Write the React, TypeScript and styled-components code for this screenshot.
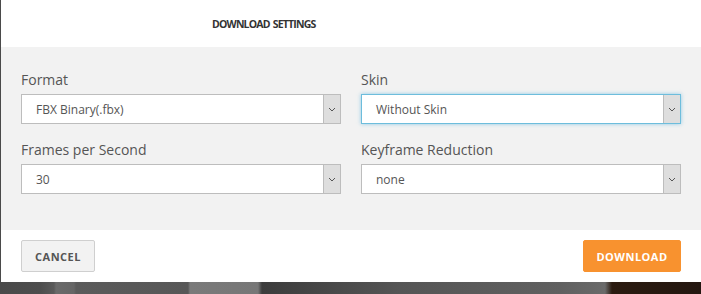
import React from 'react';
import styled, { createGlobalStyle, css } from 'styled-components';

const GlobalStyle = createGlobalStyle`
  html, body {
    margin: 0;
    padding: 0;
  }
  body {
    font-family: "Open Sans", "DejaVu Sans", sans-serif;
    background: #3a3a3a;
  }
`;

const Page = styled.div`
  width: 701px;
  height: 294px;
  overflow: hidden;
  background:
    linear-gradient(90deg,
      #4a4a4a 0px, #4d4d4d 40px, #5a5a5a 54px, #6a6a6a 56px, #666 74px,
      #5b5b5b 76px, #575757 188px, #7a7a7a 190px, #777 258px,
      #3c3c3c 262px, #555 400px, #606060 560px, #6a6a6a 605px,
      #2b1b10 612px, #241710 701px);
  display: flex;
  padding-left: 1px;
  box-sizing: border-box;
`;

const Modal = styled.div`
  width: 700px;
  height: 282px;
  display: flex;
  flex-direction: column;
  background: #fff;
`;

const Header = styled.div`
  height: 47px;
  display: flex;
  align-items: center;
  padding-left: 211px;
  box-sizing: border-box;
`;

const Title = styled.h2`
  margin: 0;
  font-size: 10.5px;
  font-weight: 700;
  color: #333;
  letter-spacing: -0.8px;
  word-spacing: 1px;
`;

const Body = styled.div`
  background: #f2f2f2;
  padding: 23px 20px 36px;
  display: grid;
  grid-template-columns: 320px 320px;
  column-gap: 20px;
  row-gap: 16px;
`;

const Field = styled.div`
  display: flex;
  flex-direction: column;
`;

const Label = styled.label`
  font-size: 14px;
  line-height: 20px;
  color: #555;
  margin-bottom: 4px;
`;

const SelectBox = styled.div<{ $focused?: boolean }>`
  height: 30px;
  box-sizing: border-box;
  display: flex;
  background: #fff;
  border: 1px solid #bdbdbd;
  ${(p) =>
    p.$focused &&
    css`
      border-color: #6dbddc;
      box-shadow: 0 0 4px rgba(102, 185, 225, 0.7);
    `}
`;

const Value = styled.span`
  flex: 1;
  display: flex;
  align-items: center;
  padding-left: 14px;
  font-size: 12px;
  color: #555;
`;

const ArrowBox = styled.span`
  width: 16px;
  border-left: 1px solid #bdbdbd;
  background: #dedede;
  display: flex;
  align-items: center;
  justify-content: center;
`;

const Footer = styled.div`
  flex: 1;
  display: flex;
  justify-content: space-between;
  align-items: flex-start;
  padding: 10px 20px 0;
`;

const Button = styled.button<{ $primary?: boolean }>`
  height: 32px;
  box-sizing: border-box;
  border-radius: 2px;
  font-family: "Open Sans", "DejaVu Sans", sans-serif;
  font-size: 11px;
  font-weight: 700;
  letter-spacing: 0.5px;
  padding: 0;
  cursor: pointer;
  ${(p) =>
    p.$primary
      ? css`
          width: 98px;
          background: #f8922f;
          border: 1px solid #f8922f;
          color: #fff;
        `
      : css`
          width: 74px;
          background: #f2f2f2;
          border: 1px solid #cfcfcf;
          color: #555;
        `}
`;

const Chevron = () => (
  <svg width="8" height="5" viewBox="0 0 8 5">
    <path d="M1 1 L4 4 L7 1" fill="none" stroke="#555" strokeWidth="1" />
  </svg>
);

type SelectProps = { value: string; focused?: boolean };

const Select = ({ value, focused }: SelectProps) => (
  <SelectBox $focused={focused}>
    <Value>{value}</Value>
    <ArrowBox>
      <Chevron />
    </ArrowBox>
  </SelectBox>
);

const fields = [
  { label: 'Format', value: 'FBX Binary(.fbx)' },
  { label: 'Skin', value: 'Without Skin', focused: true },
  { label: 'Frames per Second', value: '30' },
  { label: 'Keyframe Reduction', value: 'none' },
];

export default function App() {
  return (
    <>
      <GlobalStyle />
      <Page>
        <Modal>
          <Header>
            <Title>DOWNLOAD SETTINGS</Title>
          </Header>
          <Body>
            {fields.map((f) => (
              <Field key={f.label}>
                <Label>{f.label}</Label>
                <Select value={f.value} focused={f.focused} />
              </Field>
            ))}
          </Body>
          <Footer>
            <Button>CANCEL</Button>
            <Button $primary>DOWNLOAD</Button>
          </Footer>
        </Modal>
      </Page>
    </>
  );
}
